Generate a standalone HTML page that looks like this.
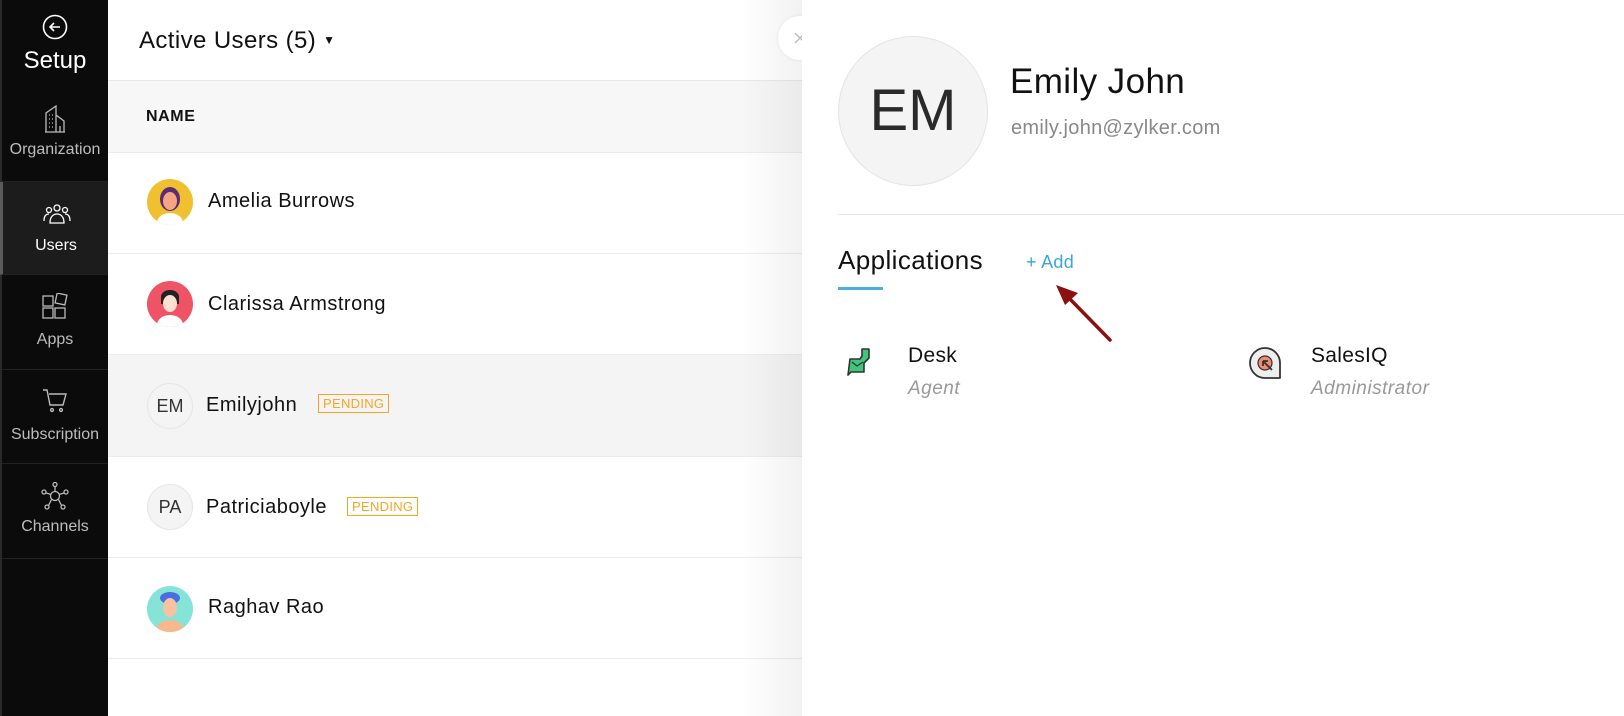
<!DOCTYPE html>
<html><head><meta charset="utf-8"><style>
*{margin:0;padding:0;box-sizing:border-box}
body{width:1624px;height:716px;overflow:hidden;background:#fff;font-family:"Liberation Sans",sans-serif;position:relative}
.abs{position:absolute}
.sb{left:0;top:0;width:108px;height:716px;background:#0b0b0b;border-left:2px solid #2a2a2a}
.item{position:absolute;left:0;width:106px;text-align:center;color:#bdbdbd;font-size:16px;border-bottom:1px solid #222}
.row{position:absolute;left:108px;width:694px;border-bottom:1px solid #ececec}
.av{position:absolute;left:147px;width:46px;height:46px;border-radius:50%}
.nm{position:absolute;font-size:20px;color:#111;letter-spacing:.5px}
.pend{position:absolute;border:1px solid #f5a623;color:#f5a623;font-size:13px;padding:1px 4px;letter-spacing:.3px}
.ini{background:#f4f4f4;border:1px solid #e6e6e6;color:#333;font-size:18px;text-align:center;line-height:44px}
</style></head><body>
<div class="abs sb">
 <svg class="abs" style="left:40px;top:14px" width="26" height="26" viewBox="0 0 26 26" fill="none" stroke="#fff" stroke-width="1.6"><circle cx="13" cy="13" r="11.5"/><path d="M18 13H8M12 9l-4 4 4 4"/></svg>
 <div class="abs" style="left:0;width:106px;top:47px;text-align:center;color:#fff;font-size:24px">Setup</div>
 <div class="item" style="top:100px;height:82px">
  <svg style="position:absolute;left:42px;top:5px" width="22" height="28" viewBox="0 0 22 28" fill="none" stroke="#bbb" stroke-width="1.3"><path d="M2 27V8L12 1v26M12 10l8 6v11M1 27h20M5 10h1M8 10h1M5 14h1M8 14h1M5 18h1M8 18h1M5 22h1M8 22h1M16 21v6"/></svg>
  <div style="position:absolute;top:41px;width:106px">Organization</div></div>
 <div class="item" style="top:182px;height:93px;background:#1c1c1c;border-left:3px solid #5a5a5a;color:#fff;left:-2px;width:108px">
  <svg style="position:absolute;left:40px;top:22px" width="28" height="20" viewBox="0 0 28 20" fill="none" stroke="#fff" stroke-width="1.3"><circle cx="14" cy="4" r="3"/><circle cx="6" cy="6" r="2.5"/><circle cx="22" cy="6" r="2.5"/><path d="M7 19c0-6 3-9 7-9s7 3 7 9zM1 17c0-5 2-7 5-7M27 17c0-5-2-7-5-7"/></svg>
  <div style="position:absolute;top:55px;width:106px">Users</div></div>
 <div class="item" style="top:275px;height:95px">
  <svg style="position:absolute;left:40px;top:18px" width="28" height="26" viewBox="0 0 28 26" fill="none" stroke="#bbb" stroke-width="1.3"><rect x="1" y="3" width="10" height="10"/><rect x="1" y="15" width="10" height="10"/><rect x="13" y="15" width="10" height="10"/><rect x="14" y="1" width="10" height="10" transform="rotate(12 19 6)"/></svg>
  <div style="position:absolute;top:56px;width:106px">Apps</div></div>
 <div class="item" style="top:370px;height:94px">
  <svg style="position:absolute;left:40px;top:18px" width="26" height="26" viewBox="0 0 26 26" fill="none" stroke="#bbb" stroke-width="1.4"><path d="M1 2h4l3 15h13l3-11H7"/><circle cx="10" cy="22" r="1.4"/><circle cx="19" cy="22" r="1.4"/></svg>
  <div style="position:absolute;top:56px;width:106px">Subscription</div></div>
 <div class="item" style="top:464px;height:95px">
  <svg style="position:absolute;left:39px;top:18px" width="28" height="28" viewBox="0 0 28 28" fill="none" stroke="#bbb" stroke-width="1.3"><circle cx="14" cy="14" r="4.5"/><circle cx="14" cy="2.5" r="2"/><circle cx="3" cy="10" r="2"/><circle cx="25" cy="10" r="2"/><circle cx="6" cy="25" r="2"/><circle cx="22" cy="25" r="2"/><path d="M14 4.5v5M5 11l5 1.5M23 11l-5 1.5M7.5 23.5l3-6M20.5 23.5l-3-6"/></svg>
  <div style="position:absolute;top:54px;width:106px">Channels</div></div>
</div>

<div class="abs" style="left:139px;top:27px;font-size:24px;color:#111;letter-spacing:.4px">Active Users (5) <span style="font-size:12px;vertical-align:4px">&#9660;</span></div>
<div class="row" style="top:80px;height:73px;background:#f7f7f7;border-top:1px solid #e8e8e8"></div>
<div class="abs" style="left:146px;top:108px;font-size:16px;font-weight:bold;color:#111;letter-spacing:.6px">NAME</div>
<div class="row" style="top:153px;height:101px"></div>
<div class="row" style="top:254px;height:101px"></div>
<div class="row" style="top:355px;height:102px;background:#f4f4f4"></div>
<div class="row" style="top:457px;height:101px"></div>
<div class="row" style="top:558px;height:101px"></div>

<div class="av" style="top:179px;background:#f0c030;overflow:hidden"><div style="position:absolute;left:13px;top:8px;width:20px;height:24px;border-radius:50%;background:#5b2c6f"></div><div style="position:absolute;left:16px;top:13px;width:14px;height:18px;border-radius:50%;background:#f4a582"></div><div style="position:absolute;left:10px;top:34px;width:26px;height:20px;border-radius:50%;background:#fff"></div></div>
<div class="nm" style="left:208px;top:190px">Amelia Burrows</div>
<div class="av" style="top:281px;background:#ef5466;overflow:hidden"><div style="position:absolute;left:14px;top:9px;width:18px;height:14px;border-radius:50% 50% 0 0;background:#222"></div><div style="position:absolute;left:16px;top:14px;width:14px;height:17px;border-radius:50%;background:#fde0cf"></div><div style="position:absolute;left:10px;top:34px;width:26px;height:20px;border-radius:50%;background:#fff"></div></div>
<div class="nm" style="left:208px;top:293px">Clarissa Armstrong</div>
<div class="av ini" style="top:383px">EM</div>
<div class="nm" style="left:206px;top:394px">Emilyjohn</div>
<div class="pend" style="left:318px;top:394px">PENDING</div>
<div class="av ini" style="top:484px">PA</div>
<div class="nm" style="left:206px;top:496px">Patriciaboyle</div>
<div class="pend" style="left:347px;top:497px">PENDING</div>
<div class="av" style="top:586px;background:#86e3d8;overflow:hidden"><div style="position:absolute;left:13px;top:6px;width:20px;height:12px;border-radius:50%;background:#4a6ee0"></div><div style="position:absolute;left:16px;top:12px;width:14px;height:19px;border-radius:50%;background:#f8c1a0"></div><div style="position:absolute;left:9px;top:34px;width:28px;height:20px;border-radius:50%;background:#f5b98c"></div></div>
<div class="nm" style="left:208px;top:596px">Raghav Rao</div>

<div class="abs" style="left:740px;top:0;width:62px;height:716px;background:linear-gradient(90deg,rgba(0,0,0,0),rgba(0,0,0,.05))"></div>
<div class="abs" style="left:778px;top:16px;width:44px;height:44px;border-radius:50%;background:#fff;box-shadow:0 0 4px rgba(0,0,0,.08)"></div>
<svg class="abs" style="left:794px;top:32px" width="12" height="12" viewBox="0 0 12 12" stroke="#bbb" stroke-width="1.4"><path d="M1 1l10 10M11 1L1 11"/></svg>
<div class="abs" style="left:802px;top:0;width:822px;height:716px;background:#fff"></div>

<div class="abs" style="left:838px;top:36px;width:150px;height:150px;border-radius:50%;background:#f4f4f4;border:1px solid #e4e4e4;text-align:center;line-height:148px;font-size:58px;color:#2a2a2a">EM</div>
<div class="abs" style="left:1010px;top:62px;font-size:35px;color:#111;letter-spacing:.4px">Emily John</div>
<div class="abs" style="left:1011px;top:117px;font-size:20px;color:#888;letter-spacing:.3px">emily.john@zylker.com</div>
<div class="abs" style="left:838px;top:214px;width:786px;height:1px;background:#e8e8e8"></div>
<div class="abs" style="left:838px;top:245px;font-size:26px;color:#111;letter-spacing:.4px">Applications</div>
<div class="abs" style="left:1026px;top:252px;font-size:18px;color:#3aa6dc;letter-spacing:.3px">+ Add</div>
<div class="abs" style="left:838px;top:287px;width:45px;height:3px;background:#4aaee0"></div>
<svg class="abs" style="left:1050px;top:282px" width="70" height="65" viewBox="0 0 70 65"><path d="M60 58L17 14" stroke="#8b1010" stroke-width="3.5" stroke-linecap="round"/><path d="M6 3l22 8-13 12z" fill="#8b1010"/></svg>

<svg class="abs" style="left:845px;top:347px" width="28" height="35" viewBox="0 0 28 35"><path d="M17 2h7v9l-5 5v9H6l-3 3 2-16h10l2-3z" fill="#3ec77a" stroke="#333" stroke-width="1.6" stroke-linejoin="round"/><path d="M7 15l5 4 6-4" fill="none" stroke="#333" stroke-width="1.3"/></svg>
<div class="abs" style="left:908px;top:344px;font-size:21px;color:#111;letter-spacing:.3px">Desk</div>
<div class="abs" style="left:908px;top:378px;font-size:19px;color:#999;font-style:italic;letter-spacing:.5px">Agent</div>

<svg class="abs" style="left:1247px;top:345px" width="36" height="36" viewBox="0 0 36 36"><path d="M18 33A15 15 0 1 1 33 18v15z" fill="#eee" stroke="#333" stroke-width="1.8" stroke-linejoin="round"/><circle cx="18" cy="18" r="7" fill="#f08a73" stroke="#333" stroke-width="1.2"/><path d="M16 16l9 9M16 16v5M16 16h5" stroke="#333" stroke-width="1.8" fill="none"/></svg>
<div class="abs" style="left:1311px;top:344px;font-size:21px;color:#111;letter-spacing:.3px">SalesIQ</div>
<div class="abs" style="left:1311px;top:378px;font-size:19px;color:#999;font-style:italic;letter-spacing:.5px">Administrator</div>
</body></html>
